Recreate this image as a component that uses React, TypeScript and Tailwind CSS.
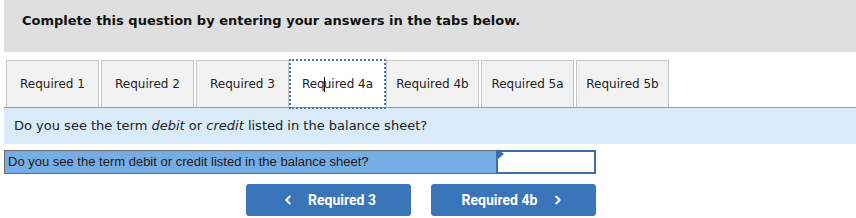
import { ChevronLeft, ChevronRight } from "lucide-react";

const tabs = ["Required 1", "Required 2", "Required 3", "Required 4a", "Required 4b", "Required 5a", "Required 5b"];

export default function App() {
  return (
    <div className="w-[856px] h-[218px] bg-white overflow-hidden font-['DejaVu_Sans',Verdana,sans-serif]">
      {/* Header */}
      <div className="ml-[4px] h-[52px] bg-[#dfdfdf] pl-[18px] pt-[12px]">
        <p className="text-[13px] font-bold text-[#111] leading-[18px]">
          Complete this question by entering your answers in the tabs below.
        </p>
      </div>

      {/* Tabs */}
      <div className="ml-[4px] mt-[8px] flex items-stretch gap-[2px] pl-[2px] h-[48px] border-b border-[#9a9a9a]">
        {tabs.map((t) =>
          t === "Required 4a" ? (
            <div
              key={t}
              className="relative z-10 w-[93px] mt-[1px] flex items-center justify-center bg-white outline-2 outline-dotted outline-[#3f78c0] text-[12px] text-[#222]"
            >
              Req<span className="inline-block w-px h-[15px] bg-[#111] -mx-px" />uired 4a
            </div>
          ) : (
            <div
              key={t}
              className="w-[93px] flex items-center justify-center bg-[#f2f2f2] border border-b-0 border-[#c6c6c6] text-[12px] text-[#222]"
            >
              {t}
            </div>
          )
        )}
      </div>

      {/* Question band */}
      <div className="ml-[4px] h-[36px] bg-[#d9eaf8] pl-[10px] flex items-center text-[13px] text-[#222]">
        Do you see the term&nbsp;<i>debit</i>&nbsp;or&nbsp;<i>credit</i>&nbsp;listed in the balance sheet?
      </div>

      {/* Answer row */}
      <div className="ml-[4px] mt-[6px] flex h-[24px]">
        <div className="w-[492px] bg-[#77ade5] border border-[#6a6a6a] border-r-0 pl-[3px] flex items-center font-['Liberation_Sans',Arial,sans-serif] text-[13px] text-[#1a1a1a]">
          Do you see the term debit or credit listed in the balance sheet?
        </div>
        <div className="relative w-[100px] bg-white border-2 border-[#3f6ea6]">
          <div className="absolute left-0 top-0 w-0 h-0 border-t-[5px] border-t-transparent border-b-[5px] border-b-transparent border-l-[6px] border-l-[#3f6ea6] -translate-y-[3px]" />
        </div>
      </div>

      {/* Navigation buttons */}
      <div className="mt-[10px] pl-[246px] flex gap-[20px] font-['Roboto',sans-serif]">
        <button className="w-[165px] h-[32px] rounded-[3px] bg-[#3a75b9] text-white text-[14px] font-bold flex items-center justify-center gap-[13px]">
          <ChevronLeft size={14} strokeWidth={3.5} />
          <span>Required 3</span>
        </button>
        <button className="w-[165px] h-[32px] rounded-[3px] bg-[#3a75b9] text-white text-[14px] font-bold flex items-center justify-center gap-[14px]">
          <span>Required 4b</span>
          <ChevronRight size={14} strokeWidth={3.5} />
        </button>
      </div>
    </div>
  );
}
